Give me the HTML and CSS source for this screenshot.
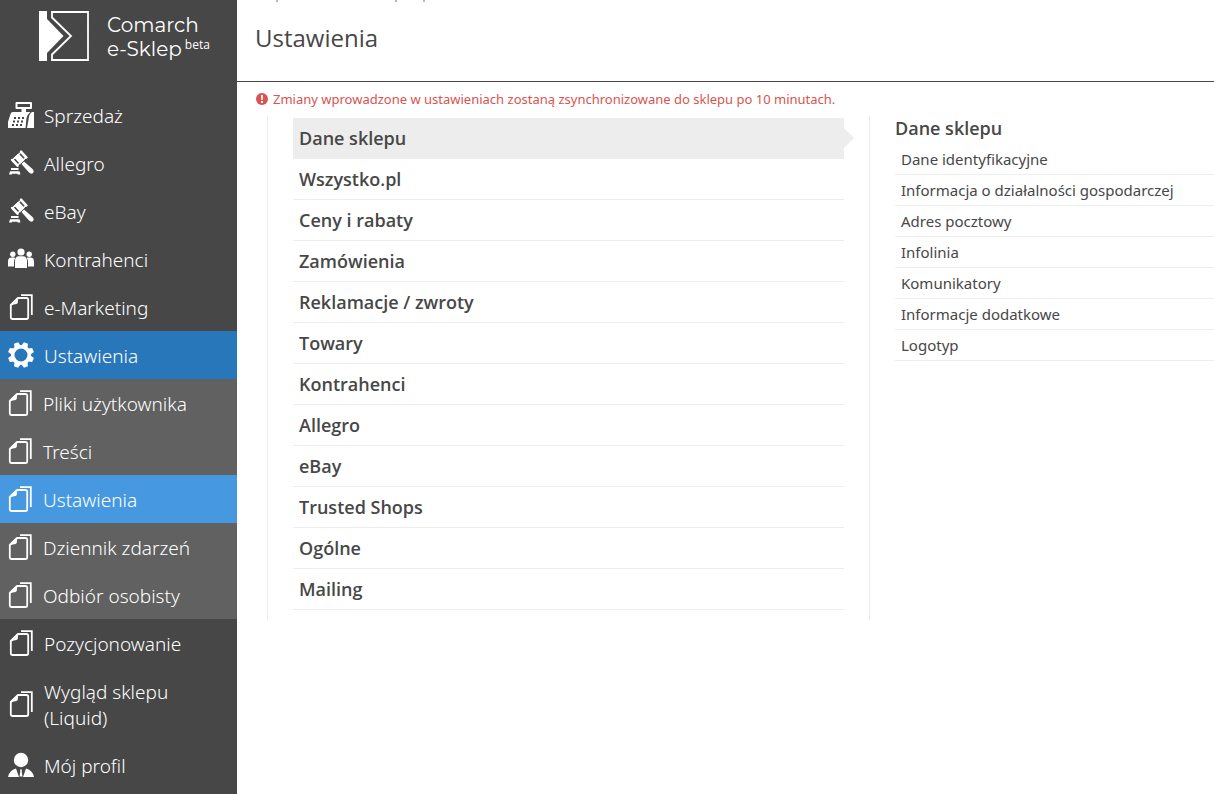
FILE: index.html
```html
<!DOCTYPE html>
<html lang="pl">
<head>
  <meta charset="UTF-8" />
  <meta name="viewport" content="width=device-width, initial-scale=1.0"/>
  <title>Ustawienia</title>
  <link rel="stylesheet" href="styles.css">
</head>
<body>
  <!-- shared icons -->
  <svg class="sprite" aria-hidden="true">
    <symbol id="icon-pages" viewBox="0 0 26 26">
      <path d="M13 1.200H23.800V21" fill="none" stroke="currentColor" stroke-width="1.800"/>
      <path d="M10 4H18.500Q20.200 4 20.200 5.700V23.300Q20.200 25 18.500 25H4.500Q2.800 25 2.800 23.300V11Z" fill="none" stroke="currentColor" stroke-width="1.800" stroke-linejoin="round"/>
      <path d="M10 4Q10.500 9.500 8.500 10Q6 10 2.800 11.500L3 10.500L9 4Z" fill="currentColor"/>
    </symbol>
    <symbol id="icon-hammer" viewBox="0 0 26 26">
      <path d="M3 18H10.500V20H3ZM2 21.200H11.500L12.500 24.500H9.500V23.700H4V24.500H1Z" fill="currentColor"/>
      <path d="M16 11.500L24.500 19Q26.500 21.500 25 23Q23 24.500 21 22.500L13.500 14Z" fill="currentColor"/>
      <g transform="rotate(-43 11.300 8.700)">
        <rect x="6" y="5" width="10.600" height="7.400" fill="none" stroke="currentColor" stroke-width="1.400"/>
        <rect x="8.300" y="4.300" width="6" height="8.800" fill="currentColor"/>
        <rect x="4" y="3.500" width="2.400" height="10.400" rx="1.200" fill="currentColor"/>
        <rect x="16.200" y="3.500" width="2.400" height="10.400" rx="1.200" fill="currentColor"/>
      </g>
    </symbol>
  </svg>

  <div class="layout">
    <aside class="sidebar">
      <a href="#" class="logo">
        <svg class="logo-mark" viewBox="0 0 50 50" aria-hidden="true">
          <path d="M0 0H8V8L24.500 25L8 42V50H0Z" fill="#fff"/>
          <path d="M13 1H49V49H13V43.500L32 25L13 6.500Z" fill="none" stroke="#fff" stroke-width="1.800"/>
        </svg>
        <span class="logo-text">
          <span>Comarch</span>
          <span class="logo-line">e-Sklep <small>beta</small></span>
        </span>
      </a>

      <nav>
        <ul class="menu">
          <li><a href="#">
            <svg class="icon" viewBox="0 0 26 26" aria-hidden="true">
              <path d="M8.500 1H23V6H8.500Z" fill="none" stroke="currentColor" stroke-width="2" stroke-linejoin="round"/>
              <path d="M13.500 6H18V10H13.500ZM5 10H22.500Q18.500 13 18.300 18L17.500 26H0V20L2.500 12Q3 10 5 10Z" fill="currentColor"/>
              <path d="M24 10H26V26H19L20.500 18Q20.800 12 24 10Z" fill="currentColor"/>
              <path d="M6 16H16M5 19.500H15M4 23H14" stroke="#474747" stroke-width="2" stroke-dasharray="2 2"/>
            </svg>
            <span>Sprzedaż</span></a></li>
          <li><a href="#"><svg class="icon" aria-hidden="true"><use href="#icon-hammer"/></svg><span>Allegro</span></a></li>
          <li><a href="#"><svg class="icon" aria-hidden="true"><use href="#icon-hammer"/></svg><span>eBay</span></a></li>
          <li><a href="#">
            <svg class="icon" viewBox="0 0 26 26" aria-hidden="true">
              <g fill="currentColor">
                <circle cx="13" cy="6" r="3.600"/>
                <circle cx="4.800" cy="8.200" r="2.700"/>
                <circle cx="21.200" cy="8.200" r="2.700"/>
                <path d="M0 20.500V15.500Q0 11.500 3.500 11.500H6Q7 11.500 7.300 12Q6 13.500 6 16V20.500ZM26 20.500V15.500Q26 11.500 22.500 11.500H20Q19 11.500 18.700 12Q20 13.500 20 16V20.500Z"/>
                <path d="M7 22V15Q7 10.300 11 10.300H15Q19 10.300 19 15V22Z"/>
              </g>
            </svg>
            <span>Kontrahenci</span></a></li>
          <li><a href="#"><svg class="icon" aria-hidden="true"><use href="#icon-pages"/></svg><span>e-Marketing</span></a></li>
          <li>
            <a href="#" class="active">
              <svg class="icon" viewBox="0 0 26 26" aria-hidden="true">
                <circle cx="13" cy="13" r="8.300" fill="none" stroke="currentColor" stroke-width="3.600"/>
                <g fill="currentColor">
                  <path id="tooth" d="M9.800 4L10.800 0H15.200L16.200 4Z" transform="rotate(22.500 13 13)"/>
                  <use href="#tooth" transform="rotate(45 13 13)"/>
                  <use href="#tooth" transform="rotate(90 13 13)"/>
                  <use href="#tooth" transform="rotate(135 13 13)"/>
                  <use href="#tooth" transform="rotate(180 13 13)"/>
                  <use href="#tooth" transform="rotate(225 13 13)"/>
                  <use href="#tooth" transform="rotate(270 13 13)"/>
                  <use href="#tooth" transform="rotate(315 13 13)"/>
                </g>
              </svg>
              <span>Ustawienia</span></a>
            <ul class="submenu">
              <li><a href="#"><svg class="icon" aria-hidden="true"><use href="#icon-pages"/></svg><span>Pliki użytkownika</span></a></li>
              <li><a href="#"><svg class="icon" aria-hidden="true"><use href="#icon-pages"/></svg><span>Treści</span></a></li>
              <li><a href="#" class="current"><svg class="icon" aria-hidden="true"><use href="#icon-pages"/></svg><span>Ustawienia</span></a></li>
              <li><a href="#"><svg class="icon" aria-hidden="true"><use href="#icon-pages"/></svg><span>Dziennik zdarzeń</span></a></li>
              <li><a href="#"><svg class="icon" aria-hidden="true"><use href="#icon-pages"/></svg><span>Odbiór osobisty</span></a></li>
            </ul>
          </li>
          <li><a href="#"><svg class="icon" aria-hidden="true"><use href="#icon-pages"/></svg><span>Pozycjonowanie</span></a></li>
          <li><a href="#"><svg class="icon" aria-hidden="true"><use href="#icon-pages"/></svg><span>Wygląd sklepu<br>(Liquid)</span></a></li>
          <li><a href="#">
            <svg class="icon" viewBox="0 0 26 26" aria-hidden="true">
              <circle cx="13" cy="8" r="7.200" fill="currentColor"/>
              <path d="M0 25Q1 18.500 8 16.500L11 25ZM26 25Q25 18.500 18 16.500L15 25Z" fill="currentColor"/>
              <path d="M12 17.500H14L13.700 19.500L14.500 24.500H11.500L12.300 19.500Z" fill="currentColor"/>
            </svg>
            <span>Mój profil</span></a></li>
        </ul>
      </nav>
    </aside>

    <main class="content">
      <header class="page-header">
        <!-- lower edge of the strip above the title -->
        <svg class="top-strip" viewBox="0 0 200 2" aria-hidden="true">
          <path d="M22 0V2M141 0V2M169 0V2" stroke="#a0a0a8" stroke-width="1.500"/>
        </svg>
        <h1>Ustawienia</h1>
      </header>

      <p class="notice">
        <svg class="notice-icon" viewBox="0 0 12 12" aria-hidden="true">
          <circle cx="6" cy="6" r="6" fill="#d9534f"/>
          <path d="M5 2H7L6.700 7H5.300ZM5 8H7V10H5Z" fill="#fff"/>
        </svg>
        Zmiany wprowadzone w ustawieniach zostaną zsynchronizowane do sklepu po 10 minutach.
      </p>

      <div class="settings">
        <ul class="groups">
          <li><a href="#" class="selected">Dane sklepu</a></li>
          <li><a href="#">Wszystko.pl</a></li>
          <li><a href="#">Ceny i rabaty</a></li>
          <li><a href="#">Zamówienia</a></li>
          <li><a href="#">Reklamacje / zwroty</a></li>
          <li><a href="#">Towary</a></li>
          <li><a href="#">Kontrahenci</a></li>
          <li><a href="#">Allegro</a></li>
          <li><a href="#">eBay</a></li>
          <li><a href="#">Trusted Shops</a></li>
          <li><a href="#">Ogólne</a></li>
          <li><a href="#">Mailing</a></li>
        </ul>

        <section class="details">
          <h2>Dane sklepu</h2>
          <ul>
            <li><a href="#">Dane identyfikacyjne</a></li>
            <li><a href="#">Informacja o działalności gospodarczej</a></li>
            <li><a href="#">Adres pocztowy</a></li>
            <li><a href="#">Infolinia</a></li>
            <li><a href="#">Komunikatory</a></li>
            <li><a href="#">Informacje dodatkowe</a></li>
            <li><a href="#">Logotyp</a></li>
          </ul>
        </section>
      </div>
    </main>
  </div>
</body>
</html>
```
FILE: styles.css
```css
* {
  box-sizing: border-box;
  margin: 0;
  padding: 0;
}

body {
  font-family: "Segoe UI", "Open Sans", "Noto Sans", sans-serif;
  color: #474747;
  background: #fff;
}

ul {
  list-style: none;
}

a {
  color: inherit;
  text-decoration: none;
}

.sprite {
  display: none;
}

.layout {
  display: flex;
  min-height: 100vh;
}

/* sidebar */
.sidebar {
  width: 237px;
  flex-shrink: 0;
  background: #474747;
  color: #fff;
}

.logo {
  display: flex;
  gap: 18px;
  height: 91px;
  padding: 11px 0 0 39px;
}

.logo-mark {
  width: 50px;
  height: 50px;
}

.logo-text {
  display: flex;
  flex-direction: column;
  padding-top: 2px;
  font-family: "Montserrat", "Open Sans", sans-serif;
  font-size: 20px;
  line-height: 24px;
}

.logo-line {
  display: flex;
  gap: 3px;
}

.logo-line small {
  font-family: "Open Sans", sans-serif;
  font-size: 12px;
  line-height: 16px;
}

.menu a {
  display: flex;
  align-items: center;
  gap: 10px;
  padding: 10px 8px;
  font-size: 19px;
  line-height: 26px;
}

.menu span {
  padding-top: 2px;
  font-family: "Segoe UI", "Noto Sans", sans-serif;
  font-weight: 300;
}

.icon {
  width: 26px;
  height: 26px;
  flex-shrink: 0;
}

.menu .active {
  background: #2977bb;
}

.submenu {
  background: #616161;
}

.menu .submenu a {
  padding-left: 7px;
}

.menu .current {
  background: #4699e1;
}

/* content */
.content {
  flex: 1;
  min-width: 0;
}

.page-header {
  height: 82px;
  padding: 0 18px;
  border-bottom: 1px solid #474747;
}

.top-strip {
  display: block;
  width: 200px;
  height: 2px;
}

h1 {
  padding-top: 18px;
  font-size: 24px;
  font-weight: 400;
  line-height: 36px;
}

.notice {
  display: flex;
  align-items: center;
  gap: 5px;
  padding: 8px 19px;
  color: #d9534f;
  font-family: "Segoe UI", "Noto Sans", sans-serif;
  font-size: 13px;
  line-height: 18px;
}

.notice-icon {
  width: 12px;
  height: 12px;
}

.settings {
  display: flex;
  margin-left: 30px;
}

.groups {
  flex: 0 0 603px;
  padding: 2px 25px 10px;
  border-left: 1px solid #ededed;
  border-right: 1px solid #ededed;
}

.groups a {
  display: block;
  position: relative;
  padding: 8px 6px;
  border-bottom: 1px solid #ededed;
  font-size: 18px;
  font-weight: 600;
  line-height: 24px;
}

.groups .selected {
  background: #ededed;
}

.groups .selected::after {
  content: "";
  position: absolute;
  left: 100%;
  top: 10px;
  border: 10px solid transparent;
  border-left-color: #ededed;
  border-right: 0;
}

.details {
  flex: 1;
  padding-left: 25px;
}

h2 {
  margin-bottom: 4px;
  font-size: 18px;
  font-weight: 600;
  line-height: 24px;
}

.details a {
  display: block;
  padding: 4px 6px;
  border-bottom: 1px solid #ededed;
  font-family: "Segoe UI", "Noto Sans", sans-serif;
  font-size: 15px;
  line-height: 22px;
}
```
